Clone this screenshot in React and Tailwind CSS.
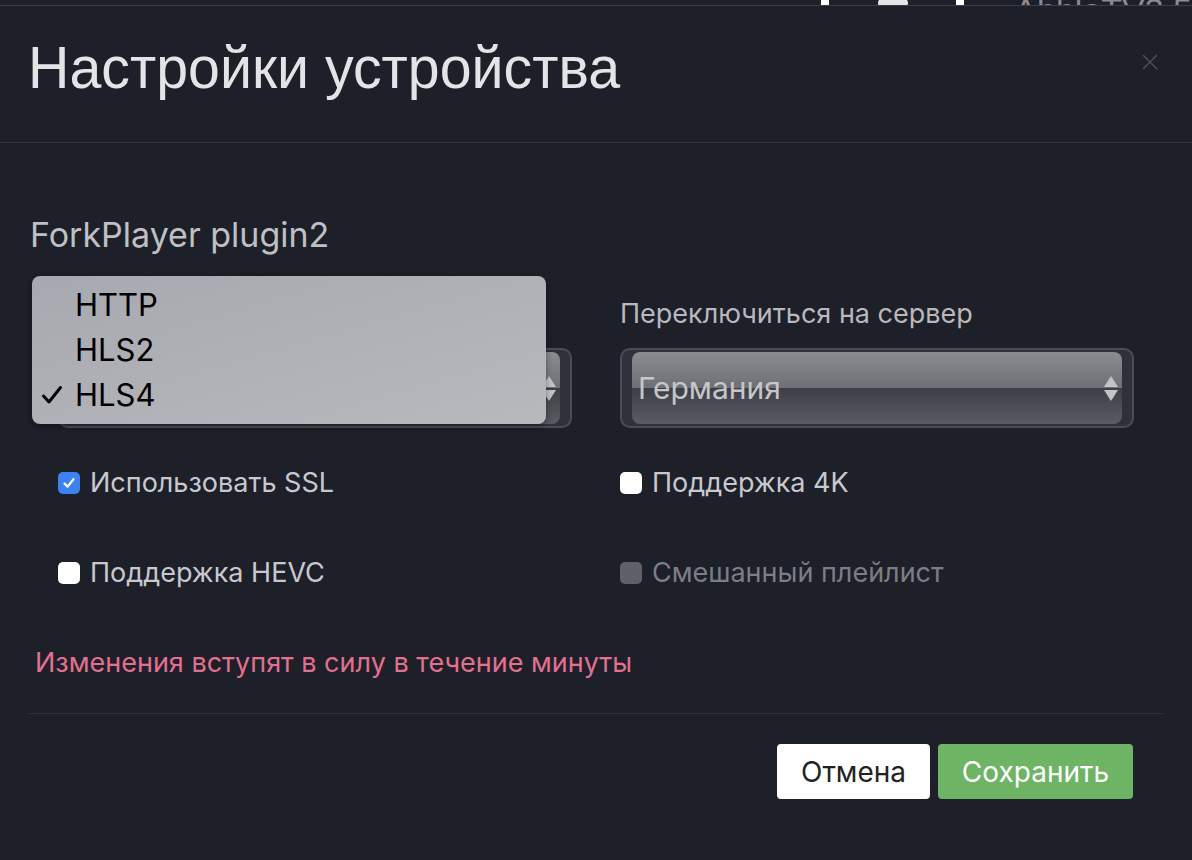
import React from 'react';

const Checkbox = ({ checked, disabled }) => {
  if (checked) {
    return (
      <span className="flex h-[22px] w-[22px] shrink-0 items-center justify-center rounded-[5px] bg-[#3d82f4]">
        <svg width="14" height="14" viewBox="0 0 14 14" fill="none">
          <path d="M2.5 7.5 L5.6 10.6 L11.5 3.2" stroke="white" strokeWidth="2.2" strokeLinecap="round" strokeLinejoin="round" />
        </svg>
      </span>
    );
  }
  return (
    <span
      className={
        disabled
          ? 'h-[22px] w-[22px] shrink-0 rounded-[5px] bg-[#5f6168]'
          : 'h-[22px] w-[22px] shrink-0 rounded-[5px] bg-white'
      }
    />
  );
};

const CheckRow = ({ checked, disabled, children }) => (
  <label className="flex h-[40px] items-center gap-[10px]">
    <Checkbox checked={checked} disabled={disabled} />
    <span className={disabled ? 'text-[27px] text-[#7c7e85]' : 'text-[27px] text-[#c9c9cd]'}>{children}</span>
  </label>
);

const GlossySelect = ({ value }) => (
  <div className="h-[80px] rounded-[10px] border-2 border-[#4b4d56] bg-[#2f313a] px-[10px] py-[2px]">
    <div className="relative h-full overflow-hidden rounded-[8px]">
      <div className="flex h-1/2 flex-col bg-gradient-to-b from-[#8a8c92] to-[#6e7076]" />
      <div className="flex h-1/2 flex-col bg-gradient-to-b from-[#3d3f47] to-[#5a5c63]" />
      <div className="absolute inset-0 flex items-center justify-between pl-[6px] pr-[4px]">
        <span className="text-[30px] text-[#c6c6ca]">{value}</span>
        <span className="flex flex-col items-center gap-[3px] text-[#c4c4c8]">
          <svg width="14" height="11" viewBox="0 0 14 11"><path d="M7 0 L14 11 L0 11 Z" fill="currentColor" /></svg>
          <svg width="14" height="11" viewBox="0 0 14 11"><path d="M0 0 L14 0 L7 11 Z" fill="currentColor" /></svg>
        </span>
      </div>
    </div>
  </div>
);

export default function App() {
  return (
    <div className="flex h-[860px] w-[1192px] flex-col overflow-hidden bg-[#1d1f29] font-['Inter','Liberation_Sans',sans-serif]">
      {/* page behind the modal, only its bottom edge shows */}
      <div className="flex h-[5px] items-end overflow-hidden">
        <div className="ml-[821px] flex h-[30px] w-[160px] items-end justify-between">
          <span className="h-[30px] w-[8px] bg-white" />
          <span className="mb-[-2px] h-[8px] w-[30px] rounded-full bg-[#e5e5e5]" />
          <span className="h-[30px] w-[8px] bg-white" />
        </div>
        <span className="ml-[50px] mb-[-22px] font-['Liberation_Sans',sans-serif] text-[34px] leading-none text-[#8a8a90]">AbbleTV3.5</span>
      </div>

      <div className="flex flex-1 flex-col border-t border-[#3a3c46]">
        {/* header */}
        <div className="flex h-[137px] items-start justify-between border-b border-[#33353f] pl-[28px] pr-[32px]">
          <h1 className="mt-[28px] origin-left scale-x-[0.955] font-['Liberation_Sans',sans-serif] text-[60px] font-normal leading-[68px] text-[#e4e4e6]">
            Настройки устройства
          </h1>
          <button className="mt-[46px] text-[#4b4d57]">
            <svg width="20" height="20" viewBox="0 0 20 20" fill="none">
              <path d="M3 3 L17 17 M17 3 L3 17" stroke="currentColor" strokeWidth="1.5" />
            </svg>
          </button>
        </div>

        {/* body */}
        <div className="flex flex-col px-[30px] pt-[70px]">
          <div className="text-[34px] leading-[44px] text-[#bfc0c4]">ForkPlayer plugin2</div>

          <div className="mt-[35px] grid grid-cols-[514px_514px] gap-x-[48px] pl-[28px]">
            <div className="relative flex flex-col">
              <div className="h-[40px]" />
              <div className="mt-[16px]">
                {/* value hidden under the open popup */}
                <GlossySelect value="" />
              </div>
              {/* native popup list */}
              <div className="absolute left-[-26px] top-[-16px] flex h-[148px] w-[514px] flex-col justify-center rounded-[8px] bg-gradient-to-br from-[#a7a9b0] to-[#b8b9bd] shadow-[0_2px_6px_rgba(0,0,0,0.4)]">
                {['HTTP', 'HLS2', 'HLS4'].map((item) => (
                  <div key={item} className="flex h-[45px] items-center">
                    <span className="flex w-[43px] justify-start pl-[9px]">
                      {item === 'HLS4' && (
                        <svg width="22" height="20" viewBox="0 0 22 20" fill="none">
                          <path d="M2.5 11 L8 17 L19.5 2.5" stroke="black" strokeWidth="3" strokeLinecap="round" strokeLinejoin="round" />
                        </svg>
                      )}
                    </span>
                    <span className="text-[31px] text-black">{item}</span>
                  </div>
                ))}
              </div>
            </div>

            <div className="flex flex-col">
              <div className="h-[40px] pt-[4px] text-[27px] leading-[36px] text-[#b9b9bd]">Переключиться на сервер</div>
              <div className="mt-[16px]">
                <GlossySelect value="Германия" />
              </div>
            </div>

            <div className="mt-[35px] flex flex-col gap-[50px]">
              <CheckRow checked>Использовать SSL</CheckRow>
              <CheckRow>Поддержка HEVC</CheckRow>
            </div>
            <div className="mt-[35px] flex flex-col gap-[50px]">
              <CheckRow>Поддержка 4K</CheckRow>
              <CheckRow disabled>Смешанный плейлист</CheckRow>
            </div>
          </div>

          <div className="mt-[52px] pl-[5px] text-[27px] leading-[36px] text-[#e2708f]">
            Изменения вступят в силу в течение минуты
          </div>
        </div>

        {/* footer */}
        <div className="mx-[28px] mt-[32px] border-t border-[#2f313b]" />
        <div className="flex justify-end gap-[8px] pr-[59px] pt-[30px]">
          <button className="h-[55px] w-[153px] rounded-[4px] bg-white text-[28px] text-[#222222]">Отмена</button>
          <button className="h-[55px] w-[195px] rounded-[4px] bg-[#6db465] text-[28px] text-white">Сохранить</button>
        </div>
      </div>
    </div>
  );
}
